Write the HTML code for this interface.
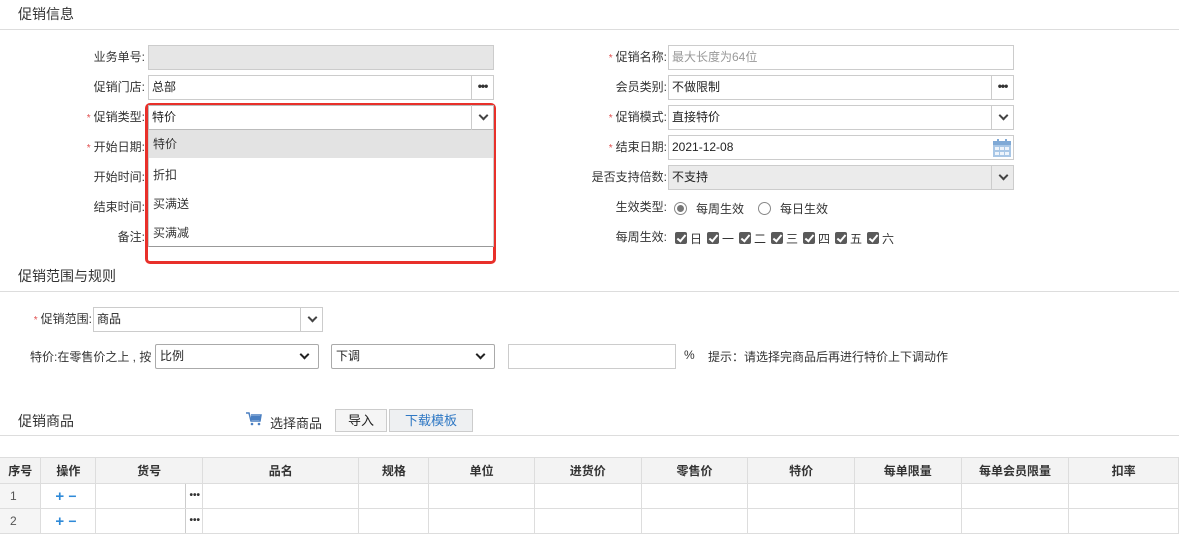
<!DOCTYPE html>
<html><head><meta charset="utf-8"><style>
*{box-sizing:border-box;margin:0;padding:0}
body{width:1179px;height:535px;overflow:hidden;background:#fff;font-family:"Liberation Sans","Noto Sans CJK SC",sans-serif;font-size:12px;color:#333;position:relative}
.a{position:absolute;white-space:nowrap}
.h{font-size:14px;color:#333}
.line{position:absolute;left:0;width:1179px;height:1px;background:#ddd}
.lbl{position:absolute;text-align:right;line-height:24px}
.star{color:#e05050;font-size:10px;margin-right:3px}
.inp{position:absolute;border:1px solid #ccc;background:#fff;height:25px;line-height:23px;padding-left:3px;color:#222}
.btn{position:absolute;top:-1px;right:-1px;width:23px;height:25px;border:1px solid #ccc;background:#fff;text-align:center;line-height:20px;font-weight:bold;color:#333;font-size:12px;letter-spacing:-1px}
.arr{position:absolute;top:-1px;right:-1px;width:23px;height:25px;border-left:1px solid #ccc;}
.arr:after{content:"";position:absolute;left:8px;top:7px;width:5px;height:5px;border-right:2px solid #444;border-bottom:2px solid #444;transform:rotate(45deg)}
.sel{position:absolute;border:1px solid #aaa;border-radius:2px;height:25px;line-height:23px;padding-left:4px;background:#fff;color:#222}
.sel:after{content:"";position:absolute;right:10px;top:6px;width:5px;height:5px;border-right:2px solid #222;border-bottom:2px solid #222;transform:rotate(45deg)}
.cb{position:absolute;top:232px;width:12px;height:12px;background:#5a5a5a;border-radius:2px}
.cb:after{content:"";position:absolute;left:4px;top:1px;width:3px;height:7px;border-right:2px solid #fff;border-bottom:2px solid #fff;transform:rotate(40deg)}
table{position:absolute;left:0;top:457px;border-collapse:collapse;table-layout:fixed}
td,th{border:1px solid #ddd;height:25px;font-size:12px}
th{background:#f3f3f3;font-weight:bold;color:#333;height:26px}
.dv{position:absolute;left:89px;top:0;height:24px;border-left:1px solid #ccc;width:1px}
.dt{position:absolute;right:2px;top:7px;font-weight:bold;font-size:10px;line-height:10px}
</style></head><body>
<div class="a h" style="left:18px;top:4px">促销信息</div>
<div class="line" style="top:29px"></div>

<div class="lbl" style="left:40px;width:105px;top:45px">业务单号:</div>
<div class="inp" style="left:148px;top:45px;width:346px;background:#e6e6e6"></div>
<div class="lbl" style="left:40px;width:105px;top:75px">促销门店:</div>
<div class="inp" style="left:148px;top:75px;width:346px">总部<div class="btn">•••</div></div>
<div class="lbl" style="left:40px;width:105px;top:105px"><span class="star">*</span>促销类型:</div>
<div class="lbl" style="left:40px;width:105px;top:135px"><span class="star">*</span>开始日期:</div>
<div class="lbl" style="left:40px;width:105px;top:165px">开始时间:</div>
<div class="lbl" style="left:40px;width:105px;top:195px">结束时间:</div>
<div class="lbl" style="left:40px;width:105px;top:225px">备注:</div>

<div class="a" style="left:145px;top:103px;width:351px;height:161px;border:3px solid #e8302a;border-radius:5px;background:#fff"></div>
<div class="inp" style="left:148px;top:105px;width:346px;border-color:#bbb">特价<div class="arr"></div></div>
<div class="a" style="left:148px;top:130px;width:346px;height:117px;border-left:1px solid #ccc;border-right:1px solid #ccc;border-bottom:1px solid #999"></div>
<div class="a" style="left:149px;top:130px;width:344px;height:28px;background:#e3e3e3;line-height:28px;padding-left:4px">特价</div>
<div class="a" style="left:153px;top:166px">折扣</div>
<div class="a" style="left:153px;top:195px">买满送</div>
<div class="a" style="left:153px;top:224px">买满减</div>

<div class="lbl" style="left:560px;width:107px;top:45px"><span class="star">*</span>促销名称:</div>
<div class="inp" style="left:668px;top:45px;width:346px;color:#999">最大长度为64位</div>
<div class="lbl" style="left:560px;width:107px;top:75px">会员类别:</div>
<div class="inp" style="left:668px;top:75px;width:346px">不做限制<div class="btn">•••</div></div>
<div class="lbl" style="left:560px;width:107px;top:105px"><span class="star">*</span>促销模式:</div>
<div class="inp" style="left:668px;top:105px;width:346px">直接特价<div class="arr"></div></div>
<div class="lbl" style="left:560px;width:107px;top:135px"><span class="star">*</span>结束日期:</div>
<div class="inp" style="left:668px;top:135px;width:346px">2021-12-08
<svg class="a" style="right:1px;top:2px" width="20" height="20" viewBox="0 0 20 20"><rect x="1" y="3" width="18" height="16" fill="#a9c7e6"/><rect x="1" y="3" width="18" height="4" fill="#7fa9d6"/><rect x="5" y="1" width="2" height="4" fill="#7fa9d6"/><rect x="13" y="1" width="2" height="4" fill="#7fa9d6"/><g fill="#eef4fb"><rect x="3" y="9" width="4" height="3"/><rect x="8" y="9" width="4" height="3"/><rect x="13" y="9" width="4" height="3"/><rect x="3" y="14" width="4" height="3"/><rect x="8" y="14" width="4" height="3"/><rect x="13" y="14" width="4" height="3"/></g></svg></div>
<div class="lbl" style="left:560px;width:107px;top:165px">是否支持倍数:</div>
<div class="inp" style="left:668px;top:165px;width:346px;background:#ebebeb">不支持<div class="arr"></div></div>
<div class="lbl" style="left:560px;width:107px;top:195px">生效类型:</div>
<div class="a" style="left:674px;top:202px;width:13px;height:13px;border:1px solid #888;border-radius:50%"><div style="margin:2px;width:7px;height:7px;border-radius:50%;background:#777"></div></div>
<div class="a" style="left:696px;top:200px">每周生效</div>
<div class="a" style="left:758px;top:202px;width:13px;height:13px;border:1px solid #888;border-radius:50%"></div>
<div class="a" style="left:780px;top:200px">每日生效</div>
<div class="lbl" style="left:560px;width:107px;top:225px">每周生效:</div>
<div class="cb" style="left:675px"></div><div class="a" style="left:690px;top:230px">日</div>
<div class="cb" style="left:707px"></div><div class="a" style="left:722px;top:230px">一</div>
<div class="cb" style="left:739px"></div><div class="a" style="left:754px;top:230px">二</div>
<div class="cb" style="left:771px"></div><div class="a" style="left:786px;top:230px">三</div>
<div class="cb" style="left:803px"></div><div class="a" style="left:818px;top:230px">四</div>
<div class="cb" style="left:835px"></div><div class="a" style="left:850px;top:230px">五</div>
<div class="cb" style="left:867px"></div><div class="a" style="left:882px;top:230px">六</div>

<div class="a h" style="left:18px;top:266px">促销范围与规则</div>
<div class="line" style="top:291px"></div>
<div class="lbl" style="left:22px;width:70px;top:307px"><span class="star">*</span>促销范围:</div>
<div class="inp" style="left:93px;top:307px;width:230px">商品<div class="arr"></div></div>
<div class="a" style="left:30px;top:348px">特价:在零售价之上 , 按</div>
<div class="sel" style="left:155px;top:344px;width:164px">比例</div>
<div class="sel" style="left:331px;top:344px;width:164px">下调</div>
<div class="a" style="left:508px;top:344px;width:168px;height:25px;border:1px solid #ccc"></div>
<div class="a" style="left:684px;top:348px">%</div>
<div class="a" style="left:708px;top:348px">提示：请选择完商品后再进行特价上下调动作</div>

<div class="a h" style="left:18px;top:411px">促销商品</div>
<svg class="a" style="left:246px;top:412px" width="16" height="14" viewBox="0 0 16 14"><path d="M0 1h3l2 8h9l1-6H5" fill="none" stroke="#4a7fc1" stroke-width="1.5"/><rect x="5" y="4" width="9" height="4" fill="#4a7fc1"/><circle cx="6" cy="12" r="1.3" fill="#4a7fc1"/><circle cx="13" cy="12" r="1.3" fill="#4a7fc1"/></svg>
<div class="a" style="left:270px;top:413px;font-size:13px">选择商品</div>
<div class="a" style="left:335px;top:409px;width:52px;height:23px;border:1px solid #ccc;background:#f5f5f5;text-align:center;line-height:21px;font-size:13px;color:#222">导入</div>
<div class="a" style="left:389px;top:409px;width:84px;height:23px;border:1px solid #ccc;background:#eef0f2;text-align:center;line-height:21px;font-size:13px;color:#2f78c4">下载模板</div>
<div class="line" style="top:435px"></div>

<table>
<colgroup><col style="width:41px"><col style="width:55px"><col style="width:107px"><col style="width:157px"><col style="width:70px"><col style="width:106px"><col style="width:107px"><col style="width:107px"><col style="width:107px"><col style="width:107px"><col style="width:108px"><col style="width:110px"></colgroup>
<tr><th style="border-left:none">序号</th><th>操作</th><th>货号</th><th>品名</th><th>规格</th><th>单位</th><th>进货价</th><th>零售价</th><th>特价</th><th>每单限量</th><th>每单会员限量</th><th>扣率</th></tr>
<tr><td style="background:#f5f5f5;padding-left:10px;color:#555;border-left:none">1</td><td style="color:#2f8ad8;font-weight:bold;font-size:15px;padding-left:14px">+ <span style="font-size:14px">−</span></td><td style="position:relative"><div class="dv"></div><span class="dt">•••</span></td><td></td><td></td><td></td><td></td><td></td><td></td><td></td><td></td><td></td></tr>
<tr><td style="background:#f5f5f5;padding-left:10px;color:#555;border-left:none">2</td><td style="color:#2f8ad8;font-weight:bold;font-size:15px;padding-left:14px">+ <span style="font-size:14px">−</span></td><td style="position:relative"><div class="dv"></div><span class="dt">•••</span></td><td></td><td></td><td></td><td></td><td></td><td></td><td></td><td></td><td></td></tr>
</table>
</body></html>
